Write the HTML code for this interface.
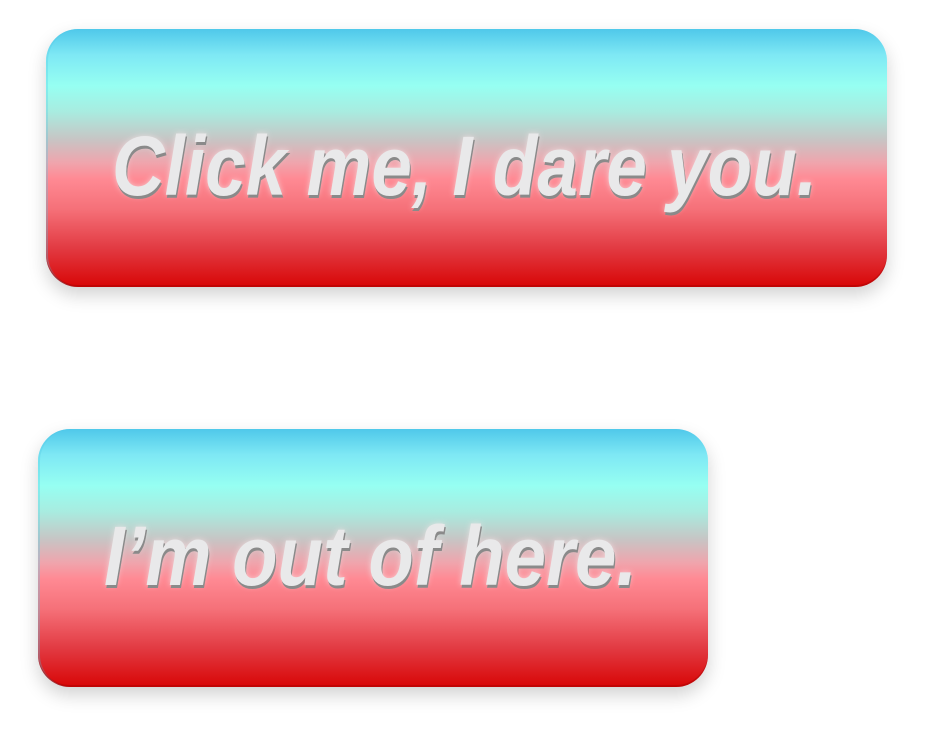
<!DOCTYPE html>
<html><head><meta charset="utf-8"><style>
html,body{margin:0;padding:0;background:#fff;width:925px;height:738px;overflow:hidden;}
.b{position:absolute;border-radius:32px;box-sizing:border-box;
background:linear-gradient(to bottom,#4fc8ea 0%,#7ee8f4 10%,#96fff2 22%,#a8ece0 32%,#c8c4c4 43%,#f0a4ac 52%,#ff8a94 58%,#f57078 70%,#e23a42 85%,#d80606 100%);
box-shadow:0 8px 18px rgba(0,0,0,0.18),inset 0 -2px 0 rgba(150,0,0,0.35),inset 2px 0 0 rgba(80,200,230,0.3);}
svg{position:absolute;left:0;top:0;}
text{font-family:"Liberation Sans",sans-serif;font-weight:bold;font-style:italic;font-size:84px;}
</style></head><body>
<div class="b" style="left:46px;top:29px;width:841px;height:258px;"></div>
<div class="b" style="left:38px;top:429px;width:670px;height:258px;"></div>
<svg width="925" height="738">
<defs><filter id="g" x="-10%" y="-30%" width="120%" height="160%"><feGaussianBlur stdDeviation="3"/></filter></defs>
<g fill="#f4e8ea" opacity="0.7" filter="url(#g)">
<text x="112" y="195" textLength="705" lengthAdjust="spacingAndGlyphs">Click me, I dare you.</text>
<text x="104" y="585" textLength="533" lengthAdjust="spacingAndGlyphs">I’m out of here.</text>
</g>
<g fill="#8a8a8a">
<text x="113" y="198" textLength="705" lengthAdjust="spacingAndGlyphs">Click me, I dare you.</text>
<text x="105" y="588" textLength="533" lengthAdjust="spacingAndGlyphs">I’m out of here.</text>
</g>
<g fill="#e9e9ea">
<text x="112" y="195" textLength="705" lengthAdjust="spacingAndGlyphs">Click me, I dare you.</text>
<text x="104" y="585" textLength="533" lengthAdjust="spacingAndGlyphs">I’m out of here.</text>
</g>
</svg>
</body></html>
